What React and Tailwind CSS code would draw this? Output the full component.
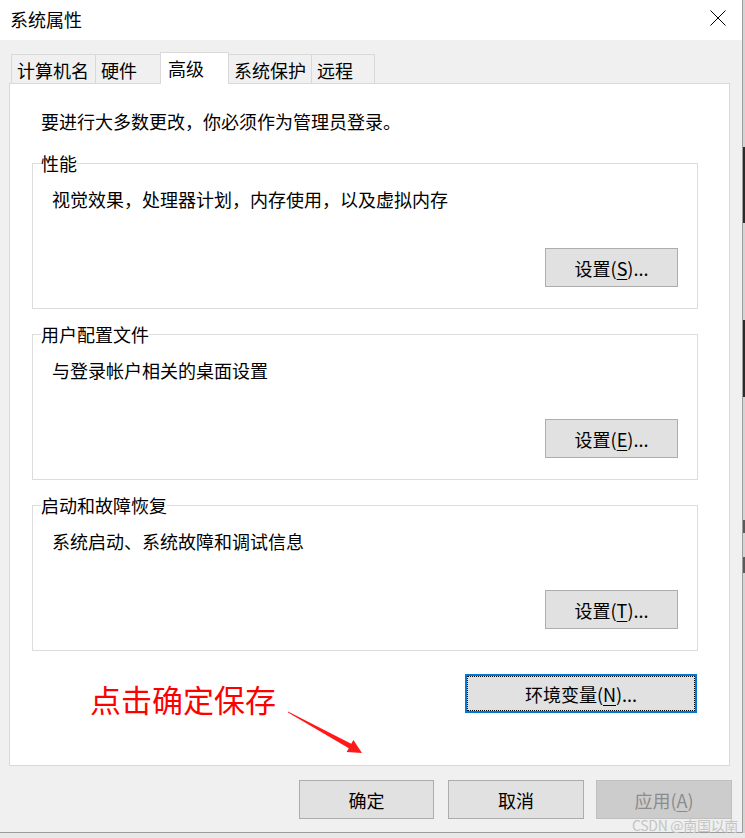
import React from "react";

const tabs = [
  { label: "计算机名", w: "w-[85px]" },
  { label: "硬件", w: "w-[66px]" },
  { label: "高级", w: "w-[69px]", active: true },
  { label: "系统保护", w: "w-[84px]" },
  { label: "远程", w: "w-[64px]" },
];

const groups = [
  { title: "性能", desc: "视觉效果，处理器计划，内存使用，以及虚拟内存", key: "S", mt: "mt-[17px]" },
  { title: "用户配置文件", desc: "与登录帐户相关的桌面设置", key: "E", mt: "mt-[13px]" },
  { title: "启动和故障恢复", desc: "系统启动、系统故障和调试信息", key: "T", mt: "mt-[13px]" },
];

function Mnemonic({ text, k }) {
  return (
    <>
      {text}(<span className="underline underline-offset-[3px]">{k}</span>)...
    </>
  );
}

function GroupBox({ title, desc, k, mt }) {
  return (
    <fieldset className={`${mt} ml-[22px] w-[666px] border border-[#dcdcdc]`}>
      <legend className="ml-[8px] leading-[24px]">{title}</legend>
      <div className="px-[19px] pt-[12px] pb-[21px] flex flex-col">
        <div className="leading-[24px] mb-[1px]">{desc}</div>
        <div className="mt-[36px] flex justify-end">
          <button className="w-[133px] h-[39px] bg-[#e1e1e1] border border-[#adadad] leading-[24px]">
            <Mnemonic text="设置" k={k} />
          </button>
        </div>
      </div>
    </fieldset>
  );
}

export default function App() {
  return (
    <div className="relative w-[745px] h-[838px] flex flex-col bg-[#e6e6e6] text-black text-[18px] font-['Noto_Sans_CJK_SC','Liberation_Sans',sans-serif]">
      <div className="flex h-[833px]">
        {/* window */}
        <div className="w-[743px] flex flex-col border-r border-b border-[#9c9c9c] bg-[#f0f0f0]">
          <div className="h-[40px] bg-white flex items-center justify-between pl-[10px] pr-[16px]">
            <span className="leading-[24px] mb-[3px]">系统属性</span>
            <svg width="16" height="16" viewBox="0 0 16 16" className="mt-[-4px]">
              <path d="M0.5 0.5 L15.5 15.5 M15.5 0.5 L0.5 15.5" stroke="#000" strokeWidth="1" />
            </svg>
          </div>

          <div className="pt-[12px] flex flex-col">
            {/* tabs */}
            <div className="flex items-end ml-[11px]">
              {tabs.map((t) =>
                t.active ? (
                  <div
                    key={t.label}
                    className={`${t.w} h-[32px] -mb-px -ml-px relative z-10 bg-white border border-b-0 border-[#d9d9d9] pl-[7px] pb-[2px] flex items-center leading-[24px]`}
                  >
                    {t.label}
                  </div>
                ) : (
                  <div
                    key={t.label}
                    className={`${t.w} h-[29px] -ml-px first:ml-0 bg-[#f0f0f0] border border-b-0 border-[#d9d9d9] pl-[5px] pt-[1px] flex items-center leading-[24px]`}
                  >
                    {t.label}
                  </div>
                )
              )}
            </div>

            {/* panel */}
            <div className="ml-[9px] w-[721px] h-[683px] bg-white border border-[#d9d9d9] pt-[25px] flex flex-col">
              <div className="pl-[31px] leading-[24px] mb-[1px]">要进行大多数更改，你必须作为管理员登录。</div>
              {groups.map((g) => (
                <GroupBox key={g.title} title={g.title} desc={g.desc} k={g.key} mt={g.mt} />
              ))}
              <div className="mt-[23px] ml-[22px] w-[666px] flex justify-end pr-[1px]">
                <button className="w-[232px] h-[39px] bg-[#e1e1e1] border-2 border-[#0078d7] p-0">
                  <div className="w-full h-full border border-dotted border-black flex items-center justify-center leading-[24px]">
                    环境变量(<span className="underline underline-offset-[3px]">N</span>)...
                  </div>
                </button>
              </div>
            </div>

            {/* dialog buttons */}
            <div className="mt-[14px] flex pl-[299px]">
              <button className="w-[135px] h-[39px] bg-[#e1e1e1] border border-[#adadad] leading-[24px]">确定</button>
              <button className="ml-[14px] w-[136px] h-[39px] bg-[#e1e1e1] border border-[#adadad] leading-[24px]">取消</button>
              <button className="ml-[12px] w-[136px] h-[39px] bg-[#cccccc] border border-[#bfbfbf] text-[#8c8c8c] leading-[24px]">
                应用(<span className="underline underline-offset-[3px]">A</span>)
              </button>
            </div>
          </div>
        </div>

        {/* desktop strip behind the window */}
        <div className="flex-1 flex flex-col bg-[#d4d4d4]">
          <div className="h-[147px]" />
          <div className="h-[76px] bg-[#2b2b2b]" />
          <div className="h-[97px]" />
          <div className="h-[77px] bg-[#2b2b2b]" />
          <div className="h-[123px]" />
          <div className="h-[13px] bg-[#5a5a5a]" />
          <div className="h-[24px]" />
          <div className="h-[16px] bg-[#5a5a5a]" />
        </div>
      </div>
      <div className="flex-1 bg-[#e8e8e8]" />

      {/* annotation */}
      <div className="absolute left-[90px] top-[683px] text-[31px] leading-[31px] text-[#ff0000]">点击确定保存</div>
      <svg className="absolute left-[280px] top-[700px]" width="90" height="60" viewBox="0 0 90 60">
        <polygon points="8,11.5 71.2,43.8 73.4,39.9 82,53 66.6,52 68.8,48.2 8,12.5" fill="#ff1a1a" />
      </svg>

      {/* watermark */}
      <div className="absolute left-[632px] top-[817px] text-[14px] leading-[16px] tracking-[-0.3px] text-[#c4c4c4]">CSDN @南国以南</div>
    </div>
  );
}
